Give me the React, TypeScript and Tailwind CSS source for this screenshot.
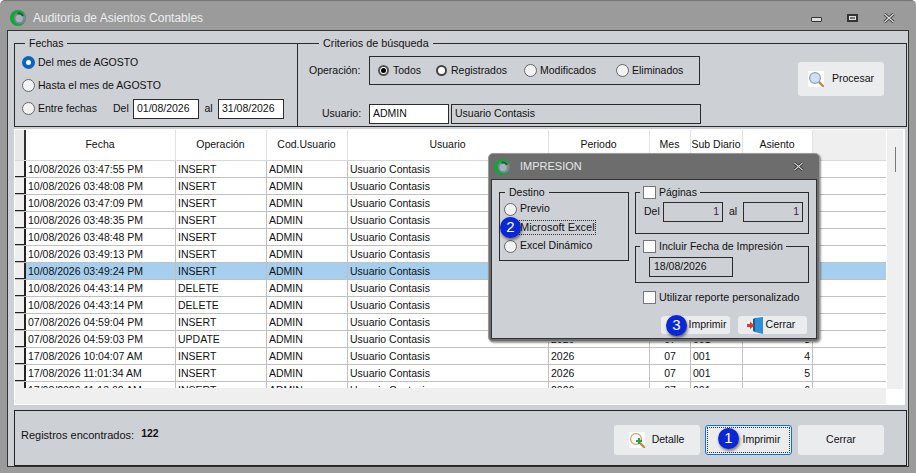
import React from "react";

const rows = [
  ["10/08/2026 03:47:55 PM", "INSERT"],
  ["10/08/2026 03:48:08 PM", "INSERT"],
  ["10/08/2026 03:47:09 PM", "INSERT"],
  ["10/08/2026 03:48:35 PM", "INSERT"],
  ["10/08/2026 03:48:48 PM", "INSERT"],
  ["10/08/2026 03:49:13 PM", "INSERT"],
  ["10/08/2026 03:49:24 PM", "INSERT"],
  ["10/08/2026 04:43:14 PM", "DELETE"],
  ["10/08/2026 04:43:14 PM", "DELETE"],
  ["07/08/2026 04:59:04 PM", "INSERT"],
  ["07/08/2026 04:59:03 PM", "UPDATE"],
  ["17/08/2026 10:04:07 AM", "INSERT"],
  ["17/08/2026 11:01:34 AM", "INSERT"],
  ["17/08/2026 11:13:02 AM", "INSERT"],
];
const asientos = [1, 2, 3, 1, 2, 3, 1, 2, 3, 1, 3, 4, 5, 6];

function Logo({ size = 16 }: { size?: number }) {
  return (
    <svg width={size} height={size} viewBox="0 0 16 16" className="shrink-0">
      <circle cx="8" cy="8" r="8" fill="#12a538" />
      <circle cx="9.8" cy="8" r="6" fill="#7f8794" />
      <circle cx="9.2" cy="8.4" r="3.6" fill="#a9afba" />
      <path d="M8 2.2a6 6 0 0 1 6 3.2l-2 .8A4 4 0 0 0 7 4.6z" fill="#0c6b2a" />
    </svg>
  );
}

function Radio({ mode = "off" }: { mode?: "off" | "dot" | "ring" | "blue" }) {
  if (mode === "blue") {
    return (
      <span className="flex h-[13px] w-[13px] shrink-0 items-center justify-center rounded-full bg-[#0a63bd]">
        <span className="h-[5px] w-[5px] rounded-full bg-white" />
      </span>
    );
  }
  if (mode === "dot") {
    return (
      <span className="flex h-[11px] w-[11px] shrink-0 items-center justify-center rounded-full border-2 border-[#555] bg-white">
        <span className="h-[5px] w-[5px] rounded-full bg-black" />
      </span>
    );
  }
  if (mode === "ring") {
    return <span className="h-[11px] w-[11px] shrink-0 rounded-full border-2 border-[#444] bg-white" />;
  }
  return <span className="h-[13px] w-[13px] shrink-0 rounded-full border border-[#666] bg-[#f2f2f2]" />;
}

function Check() {
  return <span className="h-[13px] w-[13px] shrink-0 border border-[#777] bg-white" />;
}

function Badge({ n, className }: { n: number; className: string }) {
  return (
    <span
      className={`absolute flex h-[21px] w-[21px] items-center justify-center rounded-full bg-[#0a27d6] text-[15px] text-white shadow-[1px_2px_3px_rgba(0,0,0,0.5)] ${className}`}
    >
      {n}
    </span>
  );
}

function Lens({ plus = false }: { plus?: boolean }) {
  return (
    <svg width="16" height="16" viewBox="0 0 16 16" className="shrink-0 bg-white">
      <path d="M10 10l5 5" stroke="#b98a3a" strokeWidth="2.4" strokeLinecap="round" />
      <circle cx="7" cy="7" r="5.4" fill={plus ? "#fff" : "#cfe0f5"} stroke={plus ? "#c9a266" : "#8ea0b8"} strokeWidth="1.2" />
      {plus && <path d="M10 6v6M7 9h6" stroke="#2f9e44" strokeWidth="2.2" />}
    </svg>
  );
}

function Door() {
  return (
    <svg width="18" height="17" viewBox="0 0 18 17" className="shrink-0">
      <path d="M8 1l8-1v17l-8-2z" fill="#2d8fd6" />
      <path d="M8 1v14l-2-1V2z" fill="#0f5e9c" />
      <path d="M0 7h3V4.5L7.5 8.5 3 12V10H0z" fill="#e23a2a" />
    </svg>
  );
}

function Group({
  title,
  className = "",
  legend = "ml-[10px] px-[4px]",
  children,
}: {
  title: React.ReactNode;
  className?: string;
  legend?: string;
  children: React.ReactNode;
}) {
  return (
    <fieldset className={`border border-[#2b2b2b] ${className}`}>
      <legend className={`flex items-center gap-[3px] leading-[13px] ${legend}`}>{title}</legend>
      {children}
    </fieldset>
  );
}

function Field({ children, className = "" }: { children: React.ReactNode; className?: string }) {
  return <span className={`flex h-[20px] items-center border border-[#2b2b2b] px-[3px] ${className}`}>{children}</span>;
}

function Cell({ w, right, center, children }: { w: string; right?: boolean; center?: boolean; children?: React.ReactNode }) {
  return (
    <div
      className={`flex h-full shrink-0 items-center overflow-hidden whitespace-nowrap border-r border-[#c0c0c0] px-[2px] pt-[1px] ${w} ${right ? "justify-end" : ""} ${center ? "justify-center" : ""}`}
    >
      {children}
    </div>
  );
}

function Head({ w, children }: { w: string; children: React.ReactNode }) {
  return (
    <div className={`flex h-full shrink-0 items-center justify-center whitespace-nowrap border-r border-[#e2e2e2] bg-white pr-[1px] ${w}`}>
      {children}
    </div>
  );
}

function WinButton({ children, className = "" }: { children: React.ReactNode; className?: string }) {
  return (
    <button className={`flex items-center justify-center gap-[8px] rounded-[3px] bg-[#ebecee] text-[#111] ${className}`}>{children}</button>
  );
}

export default function App() {
  return (
    <div
      className="relative h-[473px] w-[916px] overflow-hidden rounded-t-[5px] border-t border-[#777] bg-[#9b9b9b] text-[10.5px] text-[#111]"
      style={{ fontFamily: '"Liberation Sans", Arial, sans-serif' }}
    >
      {/* barra de titulo */}
      <div className="flex h-[29px] items-center pl-[10px] pr-[21px] pt-[4px] text-[#eceef0]">
        <Logo size={16} />
        <span className="ml-[7px] text-[12px]">Auditoria de Asientos Contables</span>
        <div className="ml-auto flex items-center gap-[25px]">
          <span className="mt-[3px] h-[5px] w-[11px] rounded-[1px] border border-[#333] bg-[#ddd]" />
          <span className="flex h-[8px] w-[11px] items-center justify-center border-2 border-[#333] bg-[#ddd]">
            <span className="h-[2px] w-[5px] bg-[#777]" />
          </span>
          <svg width="12" height="10" viewBox="0 0 12 10">
            <path d="M1.5 1l9 8M10.5 1l-9 8" stroke="#333" strokeWidth="3" />
            <path d="M1.5 1l9 8M10.5 1l-9 8" stroke="#ddd" strokeWidth="1.3" />
          </svg>
        </div>
      </div>

      <div className="ml-[7px] mr-[7px] flex h-[437px] flex-col border border-[#333] bg-[#cdd0d5] pl-[6px] pr-[1px] pt-[6px]">
        {/* filtros */}
        <div className="flex h-[90px] shrink-0">
          <Group title="Fechas" className="h-[90px] w-[284px] shrink-0">
            <div className="flex flex-col pl-[7px] pt-[1px]">
              <label className="flex h-[23px] items-center gap-[3px]">
                <Radio mode="blue" />
                Del mes de AGOSTO
              </label>
              <label className="flex h-[23px] items-center gap-[3px]">
                <Radio />
                Hasta el mes de AGOSTO
              </label>
              <div className="flex h-[23px] items-center">
                <label className="flex w-[91px] items-center gap-[3px]">
                  <Radio />
                  Entre fechas
                </label>
                <span className="w-[20px]">Del</span>
                <Field className="w-[66px] bg-white">01/08/2026</Field>
                <span className="w-[19px] text-center">al</span>
                <Field className="w-[66px] bg-white">31/08/2026</Field>
              </div>
            </div>
          </Group>
          <Group title="Criterios de búsqueda" legend="ml-[21px] px-[4px] text-[10.8px]" className="-ml-px h-[90px] flex-1">
            <div className="flex">
              <div className="w-[471px] pl-[11px]">
                <div className="flex items-center pt-[6px]">
                  <span className="w-[59px]">Operación:</span>
                  <div className="ml-[1px] flex h-[29px] w-[331px] items-center border border-[#2b2b2b] pl-[8px]">
                    <label className="flex w-[58px] items-center gap-[4px]">
                      <Radio mode="dot" />
                      Todos
                    </label>
                    <label className="flex w-[88px] items-center gap-[4px]">
                      <Radio mode="ring" />
                      Registrados
                    </label>
                    <label className="flex w-[92px] items-center gap-[3px]">
                      <Radio />
                      Modificados
                    </label>
                    <label className="flex items-center gap-[3px]">
                      <Radio />
                      Eliminados
                    </label>
                  </div>
                </div>
                <div className="mt-[19px] flex items-center">
                  <span className="w-[59px] pl-[13px]">Usuario:</span>
                  <Field className="ml-[1px] w-[80px] bg-white">ADMIN</Field>
                  <Field className="ml-[2px] w-[250px]">Usuario Contasis</Field>
                </div>
              </div>
              <WinButton className="ml-[29px] mt-[12px] h-[34px] w-[86px]">
                <Lens />
                <span>Procesar</span>
              </WinButton>
            </div>
          </Group>
        </div>

        {/* grilla */}
        <div className="relative mr-[2px] mt-[2px] flex h-[276px] shrink-0 flex-col border border-white bg-white">
          <div className="flex min-h-0 flex-1">
            <div className="flex min-w-0 flex-1 flex-col bg-[#efefef]">
              <div className="flex h-[31px] shrink-0 border-b border-[#d8d8d8]">
                <div className="h-full w-[11px] shrink-0 border-r-2 border-[#333] bg-[#e8e8e8]" />
                <Head w="w-[150px]">Fecha</Head>
                <Head w="w-[91px]">Operación</Head>
                <Head w="w-[81px]">Cod.Usuario</Head>
                <Head w="w-[201px]">Usuario</Head>
                <Head w="w-[101px]">Periodo</Head>
                <Head w="w-[41px]">Mes</Head>
                <Head w="w-[52px]">Sub Diario</Head>
                <Head w="w-[70px]">Asiento</Head>
              </div>
              <div className="h-[227px] overflow-hidden">
                {rows.map((r, i) => (
                  <div key={i} className={`flex h-[17px] border-b border-[#c0c0c0] ${i === 6 ? "bg-[#a6cfef]" : "bg-white"}`}>
                    <div className="h-full w-[11px] shrink-0 border-r-2 border-[#222] bg-[#efefef] shadow-[inset_0_-1px_0_#222]" />
                    <Cell w="w-[150px]">{r[0]}</Cell>
                    <Cell w="w-[91px]">{r[1]}</Cell>
                    <Cell w="w-[81px]">ADMIN</Cell>
                    <Cell w="w-[201px]">Usuario Contasis</Cell>
                    <Cell w="w-[101px]">2026</Cell>
                    <Cell w="w-[41px]" center>07</Cell>
                    <Cell w="w-[52px]">001</Cell>
                    <Cell w="w-[70px]" right>{asientos[i]}</Cell>
                  </div>
                ))}
              </div>
              <div className="flex-1 bg-[#efefef]" />
            </div>
            <div className="flex w-[18px] shrink-0 flex-col">
              <div className="h-[259px] border-x border-white bg-[#efefef] pl-[8px] pt-[17px]">
                <div className="h-[25px] w-[1px] bg-[#777]" />
              </div>
            </div>
          </div>
        </div>

        {/* pie */}
        <div className="mt-[5px] flex h-[56px] shrink-0 items-center border border-[#222] pl-[6px] pr-[22px] text-[11px]">
          <span className="-mt-[6px]">Registros encontrados:</span>
          <b className="ml-[7px] -mt-[8px] text-[10.5px]">122</b>
          <div className="ml-auto mt-[4px] flex items-center text-[10.5px]">
            <WinButton className="h-[30px] w-[86px] !gap-[7px] pr-[1px]">
              <Lens plus />
              <span>Detalle</span>
            </WinButton>
            <WinButton className="ml-[5px] h-[30px] w-[87px] border border-[#0a74d6] outline-1 -outline-offset-3 outline-dotted outline-[#333]">
              <span className="pl-[26px]">Imprimir</span>
            </WinButton>
            <WinButton className="ml-[6px] h-[30px] w-[86px]">Cerrar</WinButton>
          </div>
        </div>
      </div>

      {/* dialogo de impresion */}
      <div className="absolute left-[488px] top-[152px] flex h-[189px] w-[332px] flex-col rounded-[5px] border border-[#999] bg-[#6d6d6d] px-[2px] pb-[2px] shadow-[1px_1px_2px_rgba(0,0,0,0.4)]">
        <div className="flex h-[25px] shrink-0 items-center pl-[3px] pr-[13px] text-[#e6e8ea]">
          <Logo size={16} />
          <span className="ml-[10px] text-[11px]">IMPRESION</span>
          <svg width="11" height="9" viewBox="0 0 12 10" className="ml-auto">
            <path d="M1.5 1l9 8M10.5 1l-9 8" stroke="#333" strokeWidth="3" />
            <path d="M1.5 1l9 8M10.5 1l-9 8" stroke="#ddd" strokeWidth="1.3" />
          </svg>
        </div>
        <div className="flex flex-1 flex-col border border-[#333] bg-[#cdd0d5] px-[7px] pt-[6px]">
          <div className="flex gap-[6px]">
            <Group title="Destino" legend="ml-[5px] px-[4px]" className="h-[75px] w-[130px] shrink-0">
              <div className="flex flex-col pl-[4px] pt-[1px]">
                <label className="flex h-[18px] items-center gap-[3px]">
                  <Radio />
                  <span>Previo</span>
                </label>
                <label className="flex h-[18px] items-center gap-[3px]">
                  <Radio />
                  <span className="text-[11px] leading-[13px] outline-1 outline-dotted outline-[#333]">Microsoft Excel</span>
                </label>
                <label className="mt-[1px] flex h-[18px] items-center gap-[3px]">
                  <Radio />
                  Excel Dinámico
                </label>
              </div>
            </Group>
            <div className="flex w-[175px] flex-col gap-[6px]">
              <Group
                title={
                  <>
                    <Check />
                    Páginas
                  </>
                }
                legend="ml-[4px] px-[3px]"
                className="h-[48px]"
              >
                <div className="flex items-center pl-[8px] pt-[3px]">
                  <span className="w-[19px]">Del</span>
                  <Field className="w-[60px] justify-end text-[#3a1d52]">1</Field>
                  <span className="w-[20px] text-center">al</span>
                  <Field className="w-[60px] justify-end text-[#3a1d52]">1</Field>
                </div>
              </Group>
              <Group
                title={
                  <>
                    <Check />
                    Incluir Fecha de Impresión
                  </>
                }
                legend="ml-[4px] px-[3px]"
                className="h-[43px]"
              >
                <div className="pl-[13px] pt-[4px]">
                  <Field className="w-[84px] pl-[4px]">18/08/2026</Field>
                </div>
              </Group>
            </div>
          </div>
          <label className="ml-[144px] mt-[6px] flex items-center gap-[3px] text-[10.8px]">
            <Check />
            Utilizar reporte personalizado
          </label>
          <div className="ml-[162px] mt-[11px] flex gap-[8px]">
            <WinButton className="h-[18px] w-[69px] pl-[24px]">Imprimir</WinButton>
            <WinButton className="h-[18px] w-[69px] !gap-[1px] pr-[3px]">
              <Door />
              Cerrar
            </WinButton>
          </div>
        </div>
      </div>

      <Badge n={1} className="left-[718px] top-[427px]" />
      <Badge n={2} className="left-[500px] top-[216px]" />
      <Badge n={3} className="left-[666px] top-[314px]" />
    </div>
  );
}
